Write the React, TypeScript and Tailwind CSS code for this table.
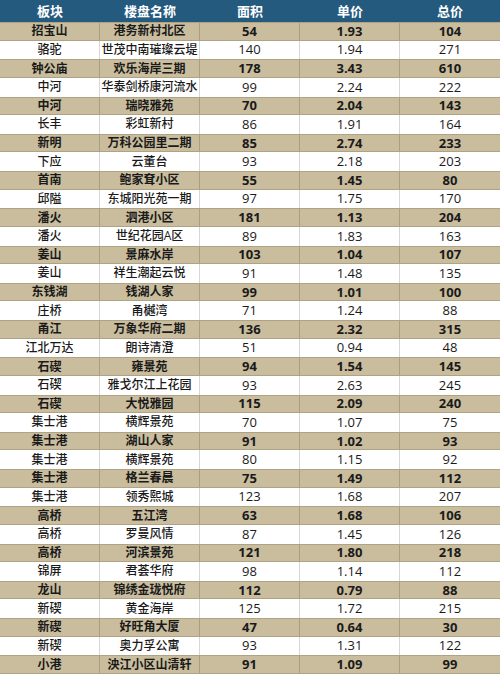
const rows: [string, string, string, string, string][] = [
  ["招宝山", "港务新村北区", "54", "1.93", "104"],
  ["骆驼", "世茂中南璀璨云堤", "140", "1.94", "271"],
  ["钟公庙", "欢乐海岸三期", "178", "3.43", "610"],
  ["中河", "华泰剑桥康河流水", "99", "2.24", "222"],
  ["中河", "瑞晓雅苑", "70", "2.04", "143"],
  ["长丰", "彩虹新村", "86", "1.91", "164"],
  ["新明", "万科公园里二期", "85", "2.74", "233"],
  ["下应", "云董台", "93", "2.18", "203"],
  ["首南", "鲍家耷小区", "55", "1.45", "80"],
  ["邱隘", "东城阳光苑一期", "97", "1.75", "170"],
  ["潘火", "泗港小区", "181", "1.13", "204"],
  ["潘火", "世纪花园A区", "89", "1.83", "163"],
  ["姜山", "景麻水岸", "103", "1.04", "107"],
  ["姜山", "祥生潮起云悦", "91", "1.48", "135"],
  ["东钱湖", "钱湖人家", "99", "1.01", "100"],
  ["庄桥", "甬樾湾", "71", "1.24", "88"],
  ["甬江", "万象华府二期", "136", "2.32", "315"],
  ["江北万达", "朗诗清澄", "51", "0.94", "48"],
  ["石碶", "雍景苑", "94", "1.54", "145"],
  ["石碶", "雅戈尔江上花园", "93", "2.63", "245"],
  ["石碶", "大悦雅园", "115", "2.09", "240"],
  ["集士港", "横辉景苑", "70", "1.07", "75"],
  ["集士港", "湖山人家", "91", "1.02", "93"],
  ["集士港", "横辉景苑", "80", "1.15", "92"],
  ["集士港", "格兰春晨", "75", "1.49", "112"],
  ["集士港", "领秀熙城", "123", "1.68", "207"],
  ["高桥", "五江湾", "63", "1.68", "106"],
  ["高桥", "罗曼风情", "87", "1.45", "126"],
  ["高桥", "河滨景苑", "121", "1.80", "218"],
  ["锦屏", "君荟华府", "98", "1.14", "112"],
  ["龙山", "锦绣金珑悦府", "112", "0.79", "88"],
  ["新碶", "黄金海岸", "125", "1.72", "215"],
  ["新碶", "好旺角大厦", "47", "0.64", "30"],
  ["新碶", "奥力孚公寓", "93", "1.31", "122"],
  ["小港", "泱江小区山清轩", "91", "1.09", "99"],
];

const headers = ["板块", "楼盘名称", "面积", "单价", "总价"];

export default function App() {
  return (
    <div className="w-[500px] h-[674px] overflow-hidden bg-white font-['Open_Sans','Noto_Sans_CJK_SC',sans-serif] text-[#1a1a1a]">
      {/* header */}
      <div className="grid grid-cols-5 h-[22px] bg-[#255a7f] text-white font-bold text-[13px]">
        {headers.map((h) => (
          <div key={h} className="flex items-center justify-center leading-none">
            {h}
          </div>
        ))}
      </div>

      {rows.map((r, i) => {
        const beige = i % 2 === 0;
        return (
          <div
            key={i}
            className={
              beige
                ? "grid grid-cols-5 h-[18.63px] box-border bg-[#c9bd9e] border-y border-[#aea385] font-bold"
                : "grid grid-cols-5 h-[18.63px] box-border bg-white font-medium"
            }
          >
            {r.map((c, j) => (
              <div
                key={j}
                className={
                  "flex items-center justify-center leading-none whitespace-nowrap " +
                  (j < 2 ? "text-[12px] " : "text-[13px] ") +
                  (j < 4 ? (beige ? "border-r border-[#a99e82]" : "border-r border-[#d6d6d6]") : "")
                }
              >
                {c}
              </div>
            ))}
          </div>
        );
      })}
    </div>
  );
}
